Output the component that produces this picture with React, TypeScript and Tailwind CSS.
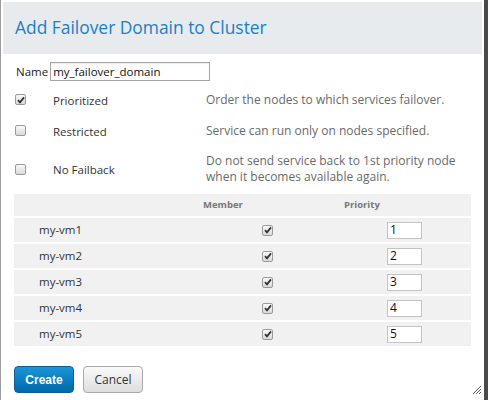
import React from "react";

/* ---------- small pieces ---------- */
function Check({ checked }: { checked: boolean }) {
  return (
    <span className="flex h-[11px] w-[11px] items-center justify-center rounded-[2px] border border-[#9a9a9a] bg-gradient-to-b from-[#fafafa] to-[#d9d9d9]">
      {checked && (
        <svg width="8" height="8" viewBox="0 0 8 8">
          <path d="M1 4.2 L3 6.3 L7 1.4" fill="none" stroke="#333" strokeWidth="1.8" />
        </svg>
      )}
    </span>
  );
}

const options = [
  { label: "Prioritized", checked: true, desc: ["Order the nodes to which services failover."], h: "h-[31px]" },
  { label: "Restricted", checked: false, desc: ["Service can run only on nodes specified."], h: "h-[31px]" },
  {
    label: "No Failback",
    checked: false,
    desc: ["Do not send service back to 1st priority node", "when it becomes available again."],
    h: "h-[46px]",
  },
];

const nodes = ["my-vm1", "my-vm2", "my-vm3", "my-vm4", "my-vm5"];

export default function App() {
  return (
    <div className="relative flex h-[400px] w-[488px] overflow-hidden bg-white font-['Open_Sans',sans-serif]">
      <div className="w-px bg-[#9c9c9c]" />
      <div className="flex flex-1 flex-col">
        {/* Header */}
        <div className="mx-[2px] mt-[2px] flex h-[52px] items-center bg-[#e8ebee] pl-[12px]">
          <h1 className="text-[17.4px] leading-none text-[#1c7fc4]">Add Failover Domain to Cluster</h1>
        </div>

        {/* Name */}
        <div className="mt-[8px] flex h-[19px] items-center pl-[15px]">
          <label className="mr-[2px] text-[11.5px] text-[#222]">Name</label>
          <div className="flex h-[19px] w-[160px] items-center border border-[#a5a5a5] px-[2px] text-[11.5px] text-[#111] shadow-[inset_0_1px_1px_rgba(0,0,0,0.08)]">
            my_failover_domain
          </div>
        </div>

        {/* Options */}
        <div className="mt-[3px] flex flex-col">
          {options.map((o) => (
            <div key={o.label} className={`flex items-center ${o.h}`}>
              <div className="flex w-[52px] pl-[14px]">
                <Check checked={o.checked} />
              </div>
              <div className="w-[153px] pt-[2px] text-[11.5px] text-[#333]">{o.label}</div>
              <div className="flex flex-col text-[12px] leading-[16px] text-[#6a6a6a]">
                {o.desc.map((d) => (
                  <span key={d}>{d}</span>
                ))}
              </div>
            </div>
          ))}
        </div>

        {/* Table */}
        <div className="ml-[13px] mt-[2px] flex w-[457px] flex-col gap-[2px]">
          <div className="grid h-[22px] grid-cols-[189px_141px_1fr] items-center bg-[#f1f1f1] text-[9.5px] font-bold text-[#777]">
            <span />
            <span>Member</span>
            <span>Priority</span>
          </div>
          {nodes.map((n, i) => (
            <div
              key={n}
              className="grid h-[24px] grid-cols-[248px_125px_1fr] items-center bg-[#f1f1f1] text-[11.5px] text-[#333]"
            >
              <span className="pl-[25px]">{n}</span>
              <span className="flex">
                <Check checked />
              </span>
              <span className="flex">
                <span className="flex h-[17px] w-[35px] items-center border border-[#c4c4c4] bg-white pl-[2px] text-[12px] text-[#111]">
                  {i + 1}
                </span>
              </span>
            </div>
          ))}
        </div>

        {/* Buttons */}
        <div className="ml-[13px] mt-[20px] flex gap-[9px]">
          <button className="h-[27px] w-[60px] rounded-[4px] border border-[#0a5f95] bg-gradient-to-b from-[#1b95d8] to-[#0069ab] font-['Liberation_Sans',sans-serif] text-[12px] font-bold text-white">
            Create
          </button>
          <button className="h-[27px] w-[60px] rounded-[4px] border border-[#a9a9a9] bg-gradient-to-b from-[#fafafa] to-[#dedede] text-[12px] text-[#333]">
            Cancel
          </button>
        </div>
      </div>
      <div className="w-[4px] bg-[#4a4a4a]" />

      {/* resize grip */}
      <svg className="absolute bottom-[6px] right-[7px]" width="9" height="9" viewBox="0 0 9 9">
        <path d="M1 9 L9 1 M4 9 L9 4 M7 9 L9 7" stroke="#555" strokeWidth="1" />
      </svg>
    </div>
  );
}
